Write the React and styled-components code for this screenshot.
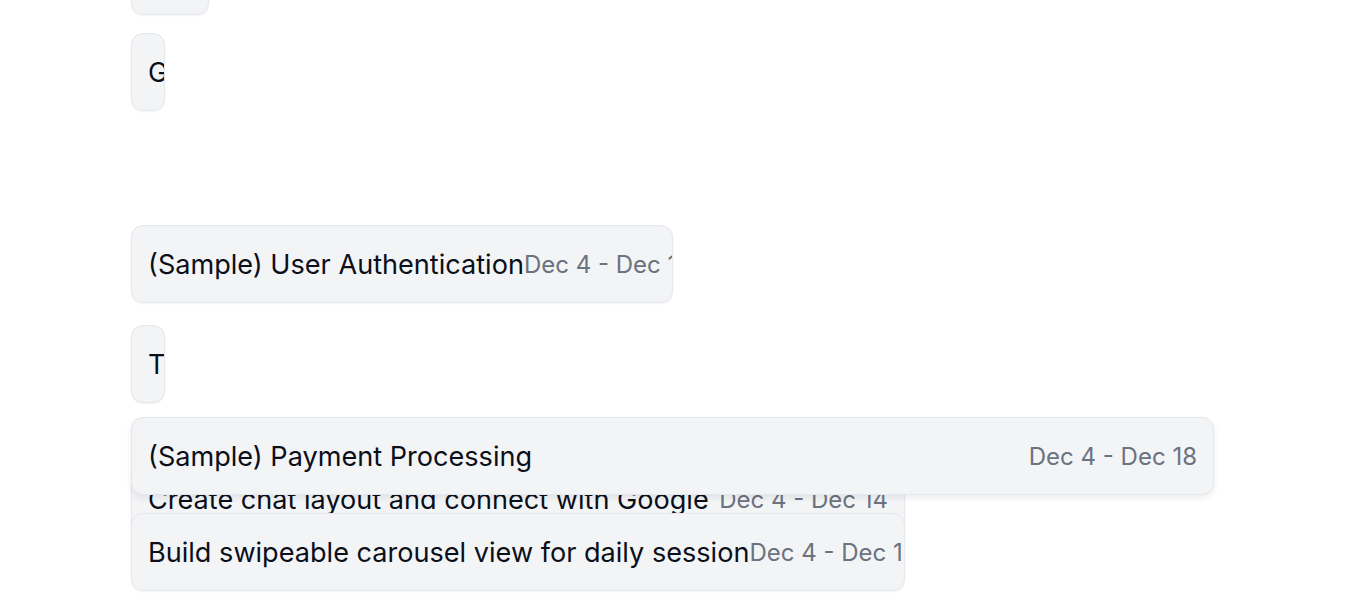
import styled, { createGlobalStyle } from 'styled-components';

const GlobalStyle = createGlobalStyle`
body{
margin:0;
background:#ffffff;
font-family:Inter, "Noto Sans", sans-serif;
}
`;

const tasks = [
  { id: 1, title: 'Set up project repository', date: 'Dec 4 - Dec 6', top: -63, width: 78 },
  { id: 2, title: 'Google sign-in flow', date: 'Dec 4 - Dec 5', top: 33, width: 34 },
  { id: 3, title: '(Sample) User Authentication', date: 'Dec 4 - Dec 11', top: 225, width: 542 },
  { id: 4, title: 'Token refresh handling', date: 'Dec 4 - Dec 5', top: 325, width: 34 },
  { id: 6, title: 'Create chat layout and connect with Google', date: 'Dec 4 - Dec 14', top: 460, width: 774 },
  { id: 5, title: '(Sample) Payment Processing', date: 'Dec 4 - Dec 18', top: 417, width: 1083, lifted: true },
  { id: 7, title: 'Build swipeable carousel view for daily session', date: 'Dec 4 - Dec 14', top: 513, width: 774 },
];

const Canvas = styled.div`
position:relative;
width:100%;
height:614px;
overflow:hidden;
`;

const Bar = styled.div`
position:absolute;
left:131px;
top:${p => p.$top}px;
width:${p => p.$width}px;
height:78px;
box-sizing:border-box;
padding:0 16px;
display:flex;
align-items:center;
justify-content:space-between;
background:#f3f4f6;
border:1px solid #e5e7eb;
border-radius:12px;
overflow:hidden;
white-space:nowrap;
z-index:${p => (p.$lifted ? 2 : 1)};
box-shadow:${p => (p.$lifted ? '0 3px 6px rgba(15,23,42,0.08)' : '0 1px 2px rgba(15,23,42,0.05)')};
cursor:grab;
`;

const Title = styled.span`
flex-shrink:0;
font-size:27.1px;
color:#0b0f19;
`;

const DateRange = styled.span`
flex-shrink:0;
font-size:24px;
color:#6b7280;
`;

const App = () => {
  return (
    <>
      <GlobalStyle />
      <Canvas>
        {tasks.map(task => (
          <Bar key={task.id} $top={task.top} $width={task.width} $lifted={task.lifted}>
            <Title>{task.title}</Title>
            <DateRange>{task.date}</DateRange>
          </Bar>
        ))}
      </Canvas>
    </>
  );
};

export default App;
